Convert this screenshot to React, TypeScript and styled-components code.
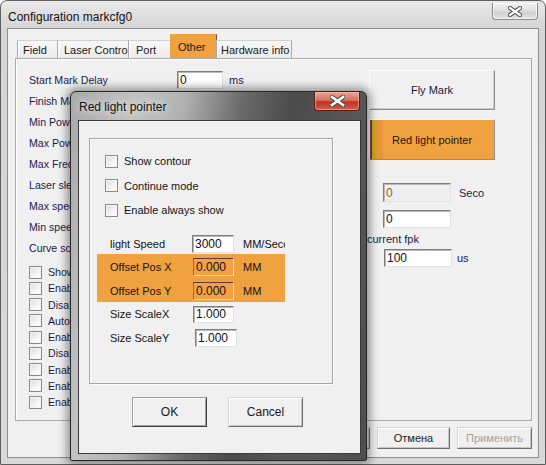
import React from 'react';
import styled, { createGlobalStyle } from 'styled-components';

const GlobalStyle = createGlobalStyle`
  html, body { margin: 0; padding: 0; background: #ffffff; }
  body { font-family: "Liberation Sans", Arial, sans-serif; font-size: 11px; }
  * { box-sizing: border-box; }
`;

const Screen = styled.div`
  position: relative;
  width: 546px;
  height: 465px;
  overflow: hidden;
`;

const MainWindow = styled.div`
  width: 546px;
  height: 465px;
  display: flex;
  flex-direction: column;
  border: 1px solid #5e5e5e;
  border-radius: 7px 7px 0 0;
  background: linear-gradient(#e9e9e9, #d5d5d5 28px, #d9d9d9);
  padding: 0 6px 6px 6px;
`;

const TitleRow = styled.div`
  height: 27px;
  display: flex;
  justify-content: space-between;
  align-items: flex-start;
`;

const WinTitle = styled.div`
  padding: 9px 0 0 1px;
  font-size: 12px;
  color: #111;
`;

const CloseBtn = styled.div<{ $red?: boolean }>`
  width: 46px;
  height: ${p => (p.$red ? 19 : 17)}px;
  margin-top: ${p => (p.$red ? 0 : 2)}px;
  margin-right: 1px;
  border: 1px solid ${p => (p.$red ? '#5b1e14' : '#8b8b8b')};
  border-top: none;
  border-radius: 0 0 4px 4px;
  background: ${p =>
    p.$red
      ? 'linear-gradient(#e8a597, #d7725f 45%, #c0321e 55%, #d2604c)'
      : 'linear-gradient(#f2f2f2, #dedede 50%, #d0d0d0 55%, #e2e2e2)'};
  box-shadow: inset 0 0 0 1px ${p => (p.$red ? 'rgba(255,200,190,0.5)' : 'rgba(255,255,255,0.7)')};
  display: flex;
  align-items: center;
  justify-content: center;
`;

const Client = styled.div`
  flex: 1;
  display: flex;
  flex-direction: column;
  border: 1px solid #8d8d8d;
  background: #f0f0f0;
  padding: 5px 6px 8px 7px;
`;

const TabStrip = styled.div`
  height: 24px;
  display: flex;
  align-items: flex-end;
  padding-left: 2px;
`;

const Tab = styled.div<{ $w: number; $active?: boolean; $pad: number }>`
  width: ${p => p.$w}px;
  height: ${p => (p.$active ? 24 : 18)}px;
  padding-left: ${p => p.$pad}px;
  display: flex;
  align-items: center;
  white-space: nowrap;
  overflow: hidden;
  color: #1a1a1a;
  font-size: 11px;
  border: 1px solid #a9a9a9;
  border-bottom: none;
  border-left-color: ${p => (p.$active ? '#f0a040' : '#a9a9a9')};
  border-right-color: ${p => (p.$active ? '#6b5a3a' : '#a9a9a9')};
  border-top-color: ${p => (p.$active ? '#f0a040' : '#d0d0d0')};
  background: ${p => (p.$active ? '#f1a240' : 'linear-gradient(#f7f7f7, #ebebeb)')};
  box-shadow: ${p => (p.$active ? 'none' : 'inset 1px 0 0 #fff')};
  & + & { margin-left: -1px; }
`;

const Panel = styled.div`
  height: 363px;
  border: 1px solid #a9a9a9;
  box-shadow: inset 1px 1px 0 #fff;
  background: #f0f0f0;
  display: flex;
  padding: 10px 0 0 13px;
`;

const LeftCol = styled.div`
  width: 340px;
  display: flex;
  flex-direction: column;
`;

const FormRow = styled.div`
  height: 21px;
  display: flex;
  align-items: center;
`;

const PanelLabel = styled.span<{ $w?: number }>`
  width: ${p => (p.$w ? `${p.$w}px` : 'auto')};
  flex-shrink: 0;
  color: #1b1b4f;
  font-size: 10.6px;
  white-space: nowrap;
`;

const Edit = styled.div<{ $w: number; $h?: number; $orange?: boolean; $off?: boolean }>`
  width: ${p => p.$w}px;
  height: ${p => p.$h ?? 18}px;
  flex-shrink: 0;
  display: flex;
  align-items: center;
  padding-left: 2px;
  font-size: 12px;
  color: ${p => (p.$off ? '#8a6a28' : '#111')};
  background: ${p => (p.$orange ? '#f4a043' : p.$off ? '#efefef' : '#ffffff')};
  border: 1px solid;
  border-color: ${p =>
    p.$orange ? '#5e3a4a #e0e0e0 #e0e0e0 #8a7a1a' : '#7d7d7d #e2e2e2 #e2e2e2 #7d7d7d'};
  box-shadow: ${p => (p.$orange ? 'none' : 'inset 1px 1px 0 #b9b9b9')};
`;

const Unit = styled.span<{ $ml: number; $dark?: boolean }>`
  margin-left: ${p => p.$ml}px;
  color: ${p => (p.$dark ? '#111' : '#1b1b4f')};
  font-size: 11px;
  white-space: nowrap;
`;

const CheckList = styled.div`
  margin-top: 6px;
  display: flex;
  flex-direction: column;
`;

const CheckRow = styled.div<{ $h: number; $gap: number }>`
  height: ${p => p.$h}px;
  display: flex;
  align-items: center;
  gap: ${p => p.$gap}px;
`;

const Box = styled.span`
  width: 13px;
  height: 13px;
  flex-shrink: 0;
  border: 1px solid #8b8b8b;
  background: linear-gradient(135deg, #d9d9d9, #f6f6f6 60%, #ffffff);
  box-shadow: inset 0 0 0 1px #f5f5f5;
`;

const RightCol = styled.div`
  width: 126px;
  display: flex;
  flex-direction: column;
  padding-top: 1px;
`;

const BigButton = styled.div<{ $hl?: boolean; $h: number }>`
  height: ${p => p.$h}px;
  display: flex;
  align-items: center;
  justify-content: center;
  font-size: 11px;
  color: ${p => (p.$hl ? '#2a1208' : '#1b1b3f')};
  background: ${p => (p.$hl ? '#f1a240' : '#f0f0f0')};
  border: 1px solid;
  border-color: #fcfcfc #8f8f8f #8f8f8f #fcfcfc;
  box-shadow: ${p =>
    p.$hl
      ? 'inset 2px 0 0 #9a2a5e, inset 5px 0 0 #c7b115, inset 13px 0 0 #e9943a'
      : 'inset -1px -1px 0 #c9c9c9'};
  & + & { margin-top: 9px; }
`;

const SideRow = styled.div<{ $mt: number; $ml: number }>`
  display: flex;
  align-items: center;
  margin-top: ${p => p.$mt}px;
  margin-left: ${p => p.$ml}px;
`;

const SideLabel = styled.div`
  height: 14px;
  margin: 4px 0 0 -2px;
  display: flex;
  align-items: center;
  color: #1b1b4f;
  font-size: 11px;
`;

const BottomBar = styled.div`
  margin-top: 6px;
  height: 22px;
  display: flex;
  justify-content: flex-end;
  gap: 7px;
`;

const PushButton = styled.div<{ $w: number; $h: number; $default?: boolean; $disabled?: boolean }>`
  width: ${p => p.$w}px;
  height: ${p => p.$h}px;
  display: flex;
  align-items: center;
  justify-content: center;
  font-size: ${p => (p.$h > 24 ? 12 : 11)}px;
  color: ${p => (p.$disabled ? '#a3a3a3' : '#1a1a1a')};
  background: #f0f0f0;
  border: 1px solid;
  border-color: ${p => (p.$default ? '#9c9c9c #3f3f3f #3f3f3f #9c9c9c' : '#d6d6d6 #6f6f6f #6f6f6f #d6d6d6')};
  box-shadow: ${p =>
    p.$default ? 'inset 1px 1px 0 #fff, inset -1px -1px 0 #a0a0a0' : 'inset 1px 1px 0 #fff, inset -1px -1px 0 #c4c4c4'};
`;

/* ---------- dialog over the window ---------- */

const Dialog = styled.div`
  position: absolute;
  left: 70px;
  top: 91px;
  width: 297px;
  height: 370px;
  display: flex;
  flex-direction: column;
  border: 1px solid #262626;
  border-radius: 6px 6px 2px 2px;
  padding: 0 5px 6px 7px;
  background: linear-gradient(100deg, #a9a9a9 0%, #c3c3c3 18%, #b1b1b1 32%, #6a6a6a 48%, #4b4b4b 62%, #575757 80%, #4e4e4e 100%);
  box-shadow: 0 0 10px 3px rgba(0, 0, 0, 0.42);
`;

const DialogTitleRow = styled.div`
  height: 28px;
  display: flex;
  justify-content: space-between;
  align-items: flex-start;
`;

const DialogTitle = styled.div`
  padding: 8px 0 0 1px;
  font-size: 12px;
  color: #111;
  text-shadow: 0 0 6px #e8e8e8, 0 0 10px #e0e0e0;
`;

const DialogClient = styled.div`
  flex: 1;
  border: 1px solid #3a3a3a;
  background: #f0f0f0;
  padding: 17px 0 0 10px;
  display: flex;
  flex-direction: column;
`;

const Group = styled.div`
  width: 244px;
  height: 246px;
  border: 1px solid #a5a5a5;
  box-shadow: inset 1px 1px 0 #fff, 1px 1px 0 #fff;
  padding: 10px 0 0 0;
  display: flex;
  flex-direction: column;
`;

const Checks = styled.div`
  padding-left: 15px;
  display: flex;
  flex-direction: column;
`;

const DlgLabel = styled.span<{ $w?: number }>`
  width: ${p => (p.$w ? `${p.$w}px` : 'auto')};
  flex-shrink: 0;
  color: #141414;
  font-size: 11px;
  white-space: nowrap;
`;

const Fields = styled.div`
  margin: 12px 0 0 7px;
  width: 188px;
  overflow: hidden;
  display: flex;
  flex-direction: column;
`;

const FieldRow = styled.div<{ $h: number; $mt?: number }>`
  height: ${p => p.$h}px;
  margin-top: ${p => p.$mt ?? 0}px;
  padding-left: 13px;
  display: flex;
  align-items: center;
`;

const Band = styled.div`
  margin-top: 1px;
  background: #f1a240;
  padding: 4px 0 2px 0;
  display: flex;
  flex-direction: column;
  gap: 6px;
`;

const DialogButtons = styled.div`
  margin-top: 13px;
  padding-left: 43px;
  display: flex;
  gap: 21px;
`;

const CloseGlyph = ({ w, h, sw }: { w: number; h: number; sw: number }) => (
  <svg width={w + 4} height={h + 4} viewBox={`0 0 ${w + 4} ${h + 4}`}>
    <path d={`M2 2 L${w + 2} ${h + 2} M${w + 2} 2 L2 ${h + 2}`} stroke="#4a4a4a" strokeWidth={sw + 2} strokeLinecap="square" />
    <path d={`M2 2 L${w + 2} ${h + 2} M${w + 2} 2 L2 ${h + 2}`} stroke="#ffffff" strokeWidth={sw} strokeLinecap="square" />
  </svg>
);

const tabs = [
  { t: 'Field', w: 41, pad: 5 },
  { t: 'Laser Contro', w: 72, pad: 6 },
  { t: 'Port', w: 43, pad: 7 },
  { t: 'Other', w: 47, pad: 7, active: true },
  { t: 'Hardware info', w: 76, pad: 4 },
];

// only the first row's edit box shows; the others sit under the dialog
const formRows = [
  'Start Mark Delay',
  'Finish Mark Delay',
  'Min Power',
  'Max Power',
  'Max Freq',
  'Laser sleep',
  'Max speed',
  'Min speed',
  'Curve scale',
];

const checks = [
  'Show mark',
  'Enable fly',
  'Disable rect',
  'Auto load',
  'Enable skip',
  'Disable jump',
  'Enable door',
  'Enable foot',
  'Enable start',
];

export default function App() {
  return (
    <>
      <GlobalStyle />
      <Screen>
        <MainWindow>
          <TitleRow>
            <WinTitle>Configuration markcfg0</WinTitle>
            <CloseBtn>
              <CloseGlyph w={10} h={7} sw={2.2} />
            </CloseBtn>
          </TitleRow>
          <Client>
            <TabStrip>
              {tabs.map(t => (
                <Tab key={t.t} $w={t.w} $pad={t.pad} $active={t.active}>
                  {t.t}
                </Tab>
              ))}
            </TabStrip>
            <Panel>
              <LeftCol>
                {formRows.map((r, i) => (
                  <FormRow key={r}>
                    <PanelLabel $w={148}>{r}</PanelLabel>
                    {i === 0 && (
                      <>
                        <Edit $w={46}>0</Edit>
                        <Unit $ml={6}>ms</Unit>
                      </>
                    )}
                  </FormRow>
                ))}
                <CheckList>
                  {checks.map(c => (
                    <CheckRow key={c} $h={16.25} $gap={6}>
                      <Box />
                      <PanelLabel>{c}</PanelLabel>
                    </CheckRow>
                  ))}
                </CheckList>
              </LeftCol>
              <RightCol>
                <BigButton $h={40}>Fly Mark</BigButton>
                <BigButton $h={41} $hl>
                  Red light pointer
                </BigButton>
                <SideRow $mt={23} $ml={14}>
                  <Edit $w={68} $h={19} $off>
                    0
                  </Edit>
                  <Unit $ml={8}>Seco</Unit>
                </SideRow>
                <SideRow $mt={8} $ml={14}>
                  <Edit $w={68}>0</Edit>
                </SideRow>
                <SideLabel>current fpk</SideLabel>
                <SideRow $mt={3} $ml={15}>
                  <Edit $w={68}>100</Edit>
                  <Unit $ml={5}>us</Unit>
                </SideRow>
              </RightCol>
            </Panel>
            <BottomBar>
              <PushButton $w={73} $h={22}>OK</PushButton>
              <PushButton $w={73} $h={22}>Отмена</PushButton>
              <PushButton $w={75} $h={22} $disabled>
                Применить
              </PushButton>
            </BottomBar>
          </Client>
        </MainWindow>

        <Dialog>
          <DialogTitleRow>
            <DialogTitle>Red light pointer</DialogTitle>
            <CloseBtn $red>
              <CloseGlyph w={11} h={8} sw={2.6} />
            </CloseBtn>
          </DialogTitleRow>
          <DialogClient>
            <Group>
              <Checks>
                {['Show contour', 'Continue mode', 'Enable always show'].map(c => (
                  <CheckRow key={c} $h={24.5} $gap={6}>
                    <Box />
                    <DlgLabel>{c}</DlgLabel>
                  </CheckRow>
                ))}
              </Checks>
              <Fields>
                <FieldRow $h={18}>
                  <DlgLabel $w={82}>light Speed</DlgLabel>
                  <Edit $w={42}>3000</Edit>
                  <Unit $ml={9} $dark>MM/Seco</Unit>
                </FieldRow>
                <Band>
                  <FieldRow $h={18}>
                    <DlgLabel $w={83}>Offset Pos X</DlgLabel>
                    <Edit $w={41} $orange>0.000</Edit>
                    <Unit $ml={9} $dark>MM</Unit>
                  </FieldRow>
                  <FieldRow $h={18}>
                    <DlgLabel $w={83}>Offset Pos Y</DlgLabel>
                    <Edit $w={41} $orange>0.000</Edit>
                    <Unit $ml={9} $dark>MM</Unit>
                  </FieldRow>
                </Band>
                <FieldRow $h={17} $mt={4}>
                  <DlgLabel $w={83}>Size ScaleX</DlgLabel>
                  <Edit $w={41} $h={17}>1.000</Edit>
                </FieldRow>
                <FieldRow $h={18} $mt={6}>
                  <DlgLabel $w={85}>Size ScaleY</DlgLabel>
                  <Edit $w={42}>1.000</Edit>
                </FieldRow>
              </Fields>
            </Group>
            <DialogButtons>
              <PushButton $w={75} $h={30} $default>OK</PushButton>
              <PushButton $w={75} $h={30}>Cancel</PushButton>
            </DialogButtons>
          </DialogClient>
        </Dialog>
      </Screen>
    </>
  );
}
